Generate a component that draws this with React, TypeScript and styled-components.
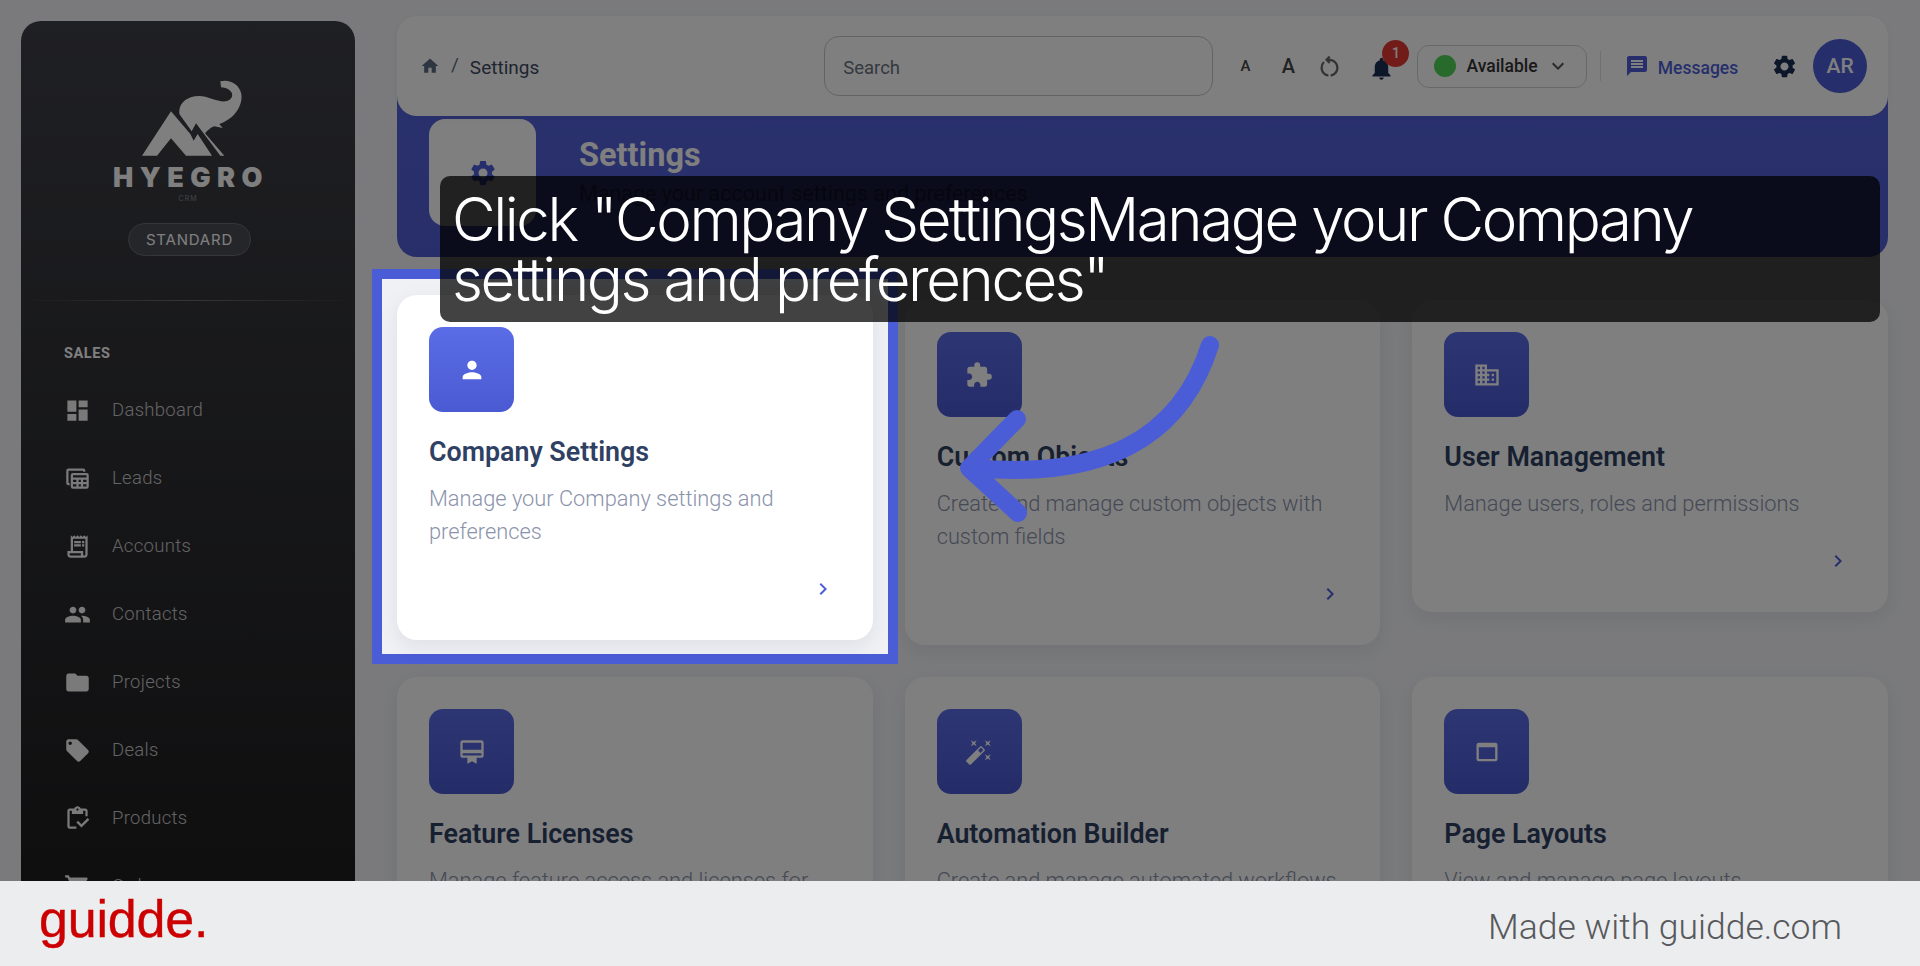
import React from "react";
import styled, { createGlobalStyle } from "styled-components";
import {
  MdHome, MdDashboard, MdPeople, MdFolder, MdLocalOffer, MdOutlineInventory,
  MdShoppingCart, MdSettings, MdNotifications, MdMessage, MdKeyboardArrowDown, MdChevronRight, MdPerson,
  MdExtension, MdOutlineDomain, MdOutlineCardMembership, MdAutoFixHigh, MdOutlineWebAsset, MdOutlineReceiptLong, MdOutlineRestartAlt,
} from "react-icons/md";

const Global = createGlobalStyle`
  html, body { margin: 0; padding: 0; height: 100%; overflow: hidden; }
  body { font-family: Roboto, "Liberation Sans", sans-serif; background: #ecedef; }
  #root { height: 100%; }
`;

const Page = styled.div`
  height: 966px;
  display: flex;
  flex-direction: column;
  overflow: hidden;
`;

const Stage = styled.div`
  position: relative;
  height: 881px;
  overflow: hidden;
  background: #f4f5f9;
  display: flex;
  align-items: flex-start;
  padding: 21px 32px 0 21px;
  gap: 42px;
  box-sizing: border-box;
`;

const Sidebar = styled.aside`
  flex: 0 0 334px;
  height: 960px;
  margin-bottom: -200px;
  border-radius: 20px;
  background: linear-gradient(180deg, #3f4047 0%, #1a1a1b 100%);
  box-sizing: border-box;
  padding-top: 58px;
`;

const Brand = styled.div`
  display: flex;
  flex-direction: column;
  align-items: center;
  height: 221px;
  border-bottom: 1px solid;
  border-image: linear-gradient(90deg, transparent, #6c6d72 50%, transparent) 1;
`;

const LogoMark = styled.svg`
  width: 102px;
  height: 78px;
  margin-left: 7px;
  display: block;
`;

const LogoText = styled.div`
  font-family: Inter, "Liberation Sans", sans-serif;
  font-weight: 900;
  font-size: 27px;
  line-height: 26px;
  letter-spacing: 6.5px;
  color: #fff;
  margin: 8px 0 0 6px;
`;

const LogoSub = styled.div`
  font-family: Inter, sans-serif;
  font-size: 7px;
  line-height: 8px;
  letter-spacing: 1px;
  color: #888;
  margin-top: 4px;
`;

const PlanBadge = styled.div`
  margin: 20px 0 0 3px;
  width: 123px;
  height: 33px;
  box-sizing: border-box;
  border: 1px solid #6a6c74;
  border-radius: 17px;
  background: #4a4c54;
  color: #ffffff;
  display: flex;
  align-items: center;
  justify-content: center;
  font-family: Inter, sans-serif;
  font-size: 15px;
  letter-spacing: 0.8px;
`;

const SectionLabel = styled.div`
  margin: 44px 0 0 43px;
  font-size: 14.5px;
  line-height: 18px;
  font-weight: 700;
  letter-spacing: 0.6px;
  color: #fff;
`;

const NavList = styled.nav`
  display: flex;
  flex-direction: column;
  margin-top: 13px;
`;

const NavRow = styled.div`
  height: 68px;
  display: flex;
  align-items: center;
  padding-left: 43px;
  color: #c8c8c8;
  font-size: 18.5px;
  font-weight: 300;
  letter-spacing: 0.3px;
  svg { width: 27px; height: 27px; margin-right: 21px; color: #f4f4f4; flex: none; }
`;

const Main = styled.main`
  flex: 1;
  min-width: 0;
  margin-top: -5px;
  display: flex;
  flex-direction: column;
`;

const TopBar = styled.header`
  position: relative;
  z-index: 1;
  height: 100px;
  border-radius: 20px;
  background: #fff;
  display: flex;
  align-items: center;
  padding: 0 21px 0 24px;
  box-shadow: 0 2px 8px rgba(0, 0, 0, 0.05);
`;

const Crumbs = styled.div`
  display: flex;
  align-items: center;
  width: 405px;
  font-size: 19px;
  color: #3e4a5f;
  svg { width: 20px; height: 20px; color: #5d6d82; margin-left: -1px; }
`;

const CrumbText = styled.span`
  margin-top: 3px;
`;

const CrumbSep = styled.span`
  margin: -4px 11px 0 11px;
  color: #5d6d82;
`;

const SearchBox = styled.div`
  width: 390px;
  height: 60px;
  box-sizing: border-box;
  border: 1.5px solid #c4c6cc;
  border-radius: 15px;
  display: flex;
  align-items: center;
  padding: 3px 0 0 18px;
  font-size: 18.5px;
  color: #6a7280;
`;

const FontBtn = styled.span<{ $size: number; $left: number }>`
  font-family: Roboto, sans-serif;
  font-weight: 500;
  font-size: ${(p) => p.$size}px;
  margin-left: ${(p) => p.$left}px;
  color: #444;
  width: 14px;
  text-align: center;
`;

const IconBtn = styled.span<{ $left: number; $size: number; $color: string }>`
  display: flex;
  margin-left: ${(p) => p.$left}px;
  color: ${(p) => p.$color};
  svg { width: ${(p) => p.$size}px; height: ${(p) => p.$size}px; }
`;

const BellWrap = styled.span`
  position: relative;
  display: flex;
  margin-left: 25px;
  margin-top: 4px;
  color: #1b2f55;
  svg { width: 27px; height: 27px; }
`;

const Badge = styled.span`
  position: absolute;
  left: 14px;
  top: -15px;
  width: 27px;
  height: 27px;
  border-radius: 50%;
  background: #e53935;
  color: #fff;
  font-size: 14px;
  font-weight: 500;
  display: flex;
  align-items: center;
  justify-content: center;
`;

const StatusPill = styled.div`
  margin-left: 22px;
  width: 170px;
  height: 43px;
  box-sizing: border-box;
  border: 1.5px solid #cfd1d6;
  border-radius: 12px;
  display: flex;
  align-items: center;
  padding-left: 16px;
  font-size: 17.5px;
  font-weight: 500;
  color: #333;
  svg { width: 24px; height: 24px; margin-left: 8px; color: #555; }
`;

const StatusDot = styled.span`
  width: 22px;
  height: 22px;
  border-radius: 50%;
  background: #4fd458;
  margin-right: 10px;
`;

const VDivider = styled.span`
  width: 1px;
  height: 30px;
  background: #e2e3e6;
  margin: 0 24px 0 13px;
`;

const MessagesLink = styled.div`
  display: flex;
  align-items: center;
  color: #4d5fd8;
  font-size: 17.5px;
  font-weight: 500;
  svg { width: 24px; height: 24px; margin-right: 9px; }
`;

const MessagesLabel = styled.span`
  margin-top: 3px;
`;

const Avatar = styled.div`
  margin-left: 15px;
  width: 54px;
  height: 54px;
  border-radius: 50%;
  background: #4d5fd8;
  color: #fff;
  font-size: 21px;
  font-weight: 500;
  display: flex;
  align-items: center;
  justify-content: center;
`;

const Banner = styled.section`
  margin-top: -20px;
  height: 161px;
  box-sizing: border-box;
  padding: 23px 32px 0;
  border-radius: 0 0 20px 20px;
  background: linear-gradient(180deg, #5463dc, #4f5dd2);
  display: flex;
  align-items: flex-start;
`;

const BannerIcon = styled.div`
  width: 107px;
  height: 107px;
  border-radius: 16px;
  background: #fff;
  display: flex;
  align-items: center;
  justify-content: center;
  color: #4d5fd8;
  flex: none;
  svg { width: 30px; height: 30px; }
`;

const BannerText = styled.div`
  margin-left: 43px;
`;

const BannerTitle = styled.h1`
  margin: 15px 0 0;
  font-size: 32.5px;
  line-height: 42px;
  font-weight: 700;
  color: #fff;
`;

const BannerSub = styled.p`
  margin: 4px 0 0;
  font-size: 21.5px;
  line-height: 28px;
  color: #2a3270;
`;

const Grid = styled.div`
  margin-top: 43px;
  display: grid;
  grid-template-columns: repeat(3, 1fr);
  gap: 32px;
  align-items: start;
`;

const Card = styled.article`
  background: #fff;
  border-radius: 20px;
  padding: 32px 32px 39px;
  box-shadow: 0 6px 20px rgba(20, 25, 50, 0.08);
  display: flex;
  flex-direction: column;
`;

const SpotlightCell = styled.div`
  position: relative;
  z-index: 3;
  ${Card} {
    position: relative;
    transform: translateY(-5px);
  }
  &::before {
    content: "";
    position: absolute;
    top: -31px;
    bottom: -19px;
    left: -25px;
    right: -25px;
    border: 10px solid #4b5cd7;
    background: #f0f1f5;
  }
`;

const Tile = styled.div`
  width: 85px;
  height: 85px;
  border-radius: 14px;
  background: linear-gradient(180deg, #5a6de6, #4a5ad2);
  display: flex;
  align-items: center;
  justify-content: center;
  color: #fff;
  svg { width: 28px; height: 28px; }
`;

const CardTitle = styled.h3`
  margin: 24px 0 0;
  font-size: 26.8px;
  line-height: 32px;
  font-weight: 600;
  color: #2f4163;
`;

const CardDesc = styled.p`
  margin: 14px 0 0;
  font-size: 21.8px;
  line-height: 33px;
  font-weight: 300;
  color: #8b93ab;
`;

const CardArrow = styled.div`
  display: flex;
  justify-content: flex-end;
  margin-top: 29px;
  height: 24px;
  padding-right: 6px;
  color: #4d5fd8;
  svg { width: 24px; height: 24px; }
`;

const Dim = styled.div`
  position: absolute;
  inset: 0;
  z-index: 2;
  background: rgba(0, 0, 0, 0.5);
`;

const Caption = styled.div`
  position: absolute;
  z-index: 5;
  left: 440px;
  top: 176px;
  width: 1440px;
  height: 146px;
  box-sizing: border-box;
  padding: 13px 12px;
  border-radius: 10px;
  background: rgba(0, 0, 0, 0.74);
  color: #fff;
  font-family: Inter, sans-serif;
  font-size: 60px;
  line-height: 60px;
  font-weight: 350;
  letter-spacing: -2.45px;
`;

const ArrowSvg = styled.svg`
  position: absolute;
  z-index: 6;
  left: 0;
  top: 0;
  pointer-events: none;
`;

const Footer = styled.footer`
  height: 85px;
  background: #ecedef;
  display: flex;
  align-items: center;
  justify-content: space-between;
  padding: 0 78px 0 39px;
`;

const GuiddeLogo = styled.div`
  font-family: "Liberation Sans", sans-serif;
  font-size: 52px;
  line-height: 60px;
  letter-spacing: -0.2px;
  color: #cc0000;
  margin-top: -10px;
  -webkit-text-stroke: 0.4px #cc0000;
`;

const MadeWith = styled.div`
  font-size: 35.5px;
  font-weight: 300;
  color: #58595c;
  margin-top: 7px;
`;

const LeadsIcon = () => (
  <svg viewBox="0 0 24 24" fill="currentColor">
    <path d="M4 3h13a2 2 0 0 1 2 2v1h-2V5H4v11h1v2H4a2 2 0 0 1-2-2V5a2 2 0 0 1 2-2z" />
    <path d="M8 7h12a2 2 0 0 1 2 2v10a2 2 0 0 1-2 2H8a2 2 0 0 1-2-2V9a2 2 0 0 1 2-2zm0 2v2h12V9H8zm0 4v2h3v-2H8zm5 0v2h2v-2h-2zm4 0v2h3v-2h-3zM8 17v2h3v-2H8zm5 0v2h2v-2h-2zm4 0v2h3v-2h-3z" fillRule="evenodd" />
  </svg>
);

const nav = [
  ["Dashboard", MdDashboard],
  ["Leads", LeadsIcon],
  ["Accounts", MdOutlineReceiptLong],
  ["Contacts", MdPeople],
  ["Projects", MdFolder],
  ["Deals", MdLocalOffer],
  ["Products", MdOutlineInventory],
  ["Orders", MdShoppingCart],
] as const;

const cards = [
  ["Custom Objects", "Create and manage custom objects with custom fields", MdExtension],
  ["User Management", "Manage users, roles and permissions", MdOutlineDomain],
  ["Feature Licenses", "Manage feature access and licenses for your organization", MdOutlineCardMembership],
  ["Automation Builder", "Create and manage automated workflows", MdAutoFixHigh],
  ["Page Layouts", "View and manage page layouts", MdOutlineWebAsset],
] as const;

export default function App() {
  return (
    <Page>
      <Global />
      <Stage>
        <Sidebar>
          <Brand>
            <LogoMark viewBox="30 25 306 234" fill="#fff">
              <path d="M33 255 L120 122 L178 190 L188 210 L200 190 L243 255 L165 255 L120 203 L78 255 Z" />
              <path d="M145 118 C148 95 170 76 205 76 C230 76 260 95 285 92 C305 88 310 68 295 58 C288 53 278 51 270 50 L268 32 C295 25 325 40 331 70 C336 105 310 145 265 160 L275 172 L250 167 C240 170 230 178 222 188 L280 255 L268 255 L195 158 L182 182 L145 130 Z" />
            </LogoMark>
            <LogoText>HYEGRO</LogoText>
            <LogoSub>CRM</LogoSub>
            <PlanBadge>STANDARD</PlanBadge>
          </Brand>
          <SectionLabel>SALES</SectionLabel>
          <NavList>
            {nav.map(([label, Icon]) => (
              <NavRow key={label}>
                <Icon />
                {label}
              </NavRow>
            ))}
          </NavList>
        </Sidebar>
        <Main>
          <TopBar>
            <Crumbs>
              <MdHome />
              <CrumbSep>/</CrumbSep>
              <CrumbText>Settings</CrumbText>
            </Crumbs>
            <SearchBox>Search</SearchBox>
            <FontBtn $size={15} $left={26}>A</FontBtn>
            <FontBtn $size={20} $left={29}>A</FontBtn>
            <IconBtn $left={21} $size={27} $color="#666"><MdOutlineRestartAlt /></IconBtn>
            <BellWrap>
              <MdNotifications />
              <Badge>1</Badge>
            </BellWrap>
            <StatusPill>
              <StatusDot />
              Available
              <MdKeyboardArrowDown />
            </StatusPill>
            <VDivider />
            <MessagesLink>
              <MdMessage />
              <MessagesLabel>Messages</MessagesLabel>
            </MessagesLink>
            <IconBtn $left={33} $size={27} $color="#1b2f55"><MdSettings /></IconBtn>
            <Avatar>AR</Avatar>
          </TopBar>
          <Banner>
            <BannerIcon><MdSettings /></BannerIcon>
            <BannerText>
              <BannerTitle>Settings</BannerTitle>
              <BannerSub>Manage your account settings and preferences</BannerSub>
            </BannerText>
          </Banner>
          <Grid>
            <SpotlightCell>
              <Card>
                <Tile><MdPerson /></Tile>
                <CardTitle>Company Settings</CardTitle>
                <CardDesc>Manage your Company settings and preferences</CardDesc>
                <CardArrow><MdChevronRight /></CardArrow>
              </Card>
            </SpotlightCell>
            {cards.map(([title, desc, Icon]) => (
              <Card key={title}>
                <Tile><Icon /></Tile>
                <CardTitle>{title}</CardTitle>
                <CardDesc>{desc}</CardDesc>
                <CardArrow><MdChevronRight /></CardArrow>
              </Card>
            ))}
          </Grid>
        </Main>
        <Dim />
        <Caption>Click "Company SettingsManage your Company settings and preferences"</Caption>
        <ArrowSvg width="1920" height="881" viewBox="0 0 1920 881" fill="none" stroke="#4b5cd7" strokeWidth="18" strokeLinecap="round" strokeLinejoin="round">
          <path d="M1210 345 C1180 440 1100 480 972 468" />
          <path d="M1017 419 L969 468 L1018 513" />
        </ArrowSvg>
      </Stage>
      <Footer>
        <GuiddeLogo>guidde.</GuiddeLogo>
        <MadeWith>Made with guidde.com</MadeWith>
      </Footer>
    </Page>
  );
}
